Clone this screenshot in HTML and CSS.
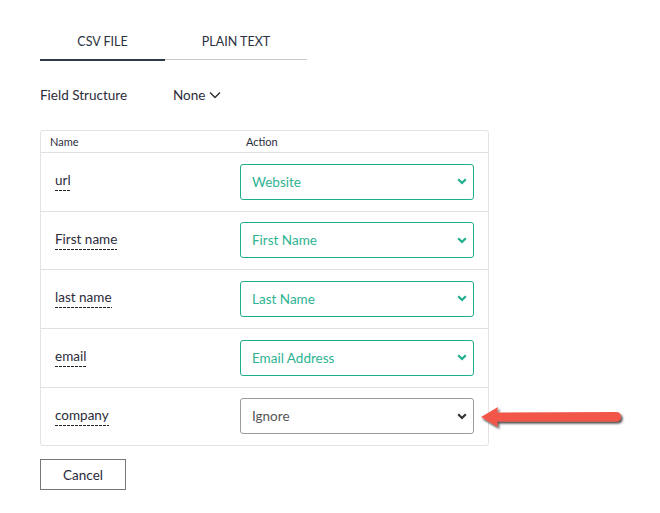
FILE: index.html
```html
<!DOCTYPE html>
<html>
<head>
<meta charset="utf-8">
<link rel="stylesheet" href="styles.css">
</head>
<body>
<div class="page">
  <div class="tabs">
    <div class="tab active">CSV FILE</div>
    <div class="tab">PLAIN TEXT</div>
  </div>
  <div class="structure">
    <span class="label">Field Structure</span>
    <span class="dropdown">None
      <svg width="12" height="8" viewBox="0 0 12 8"><path d="M1 1.5 L6 6.5 L11 1.5" fill="none" stroke="#333" stroke-width="1.5"/></svg>
    </span>
  </div>
  <div class="table">
    <div class="thead">
      <div class="th name-col">Name</div>
      <div class="th action-col">Action</div>
    </div>
    <div class="row">
      <div class="name-col"><span class="fname">url</span></div>
      <div class="action-col"><div class="select green"><span>Website</span><svg class="chev" width="10" height="7" viewBox="0 0 10 7"><path d="M1.2 1.2 L5 5 L8.8 1.2" fill="none" stroke="currentColor" stroke-width="2.2"/></svg></div></div>
    </div>
    <div class="row short">
      <div class="name-col"><span class="fname">First name</span></div>
      <div class="action-col"><div class="select green"><span>First Name</span><svg class="chev" width="10" height="7" viewBox="0 0 10 7"><path d="M1.2 1.2 L5 5 L8.8 1.2" fill="none" stroke="currentColor" stroke-width="2.2"/></svg></div></div>
    </div>
    <div class="row">
      <div class="name-col"><span class="fname">last name</span></div>
      <div class="action-col"><div class="select green"><span>Last Name</span><svg class="chev" width="10" height="7" viewBox="0 0 10 7"><path d="M1.2 1.2 L5 5 L8.8 1.2" fill="none" stroke="currentColor" stroke-width="2.2"/></svg></div></div>
    </div>
    <div class="row">
      <div class="name-col"><span class="fname">email</span></div>
      <div class="action-col"><div class="select green"><span>Email Address</span><svg class="chev" width="10" height="7" viewBox="0 0 10 7"><path d="M1.2 1.2 L5 5 L8.8 1.2" fill="none" stroke="currentColor" stroke-width="2.2"/></svg></div></div>
    </div>
    <div class="row last">
      <div class="name-col"><span class="fname">company</span></div>
      <div class="action-col"><div class="select gray"><span>Ignore</span><svg class="chev" width="10" height="7" viewBox="0 0 10 7"><path d="M1.2 1.2 L5 5 L8.8 1.2" fill="none" stroke="currentColor" stroke-width="2.2"/></svg></div></div>
    </div>
  </div>
  <button class="cancel">Cancel</button>
  <svg class="arrow" width="160" height="34" viewBox="0 0 160 34">
    <defs>
      <filter id="sh" x="-10%" y="-40%" width="120%" height="180%">
        <feDropShadow dx="1.5" dy="2" stdDeviation="1.2" flood-color="#000" flood-opacity="0.75"/>
      </filter>
    </defs>
    <g filter="url(#sh)">
      <path d="M3 14 L20 4 L19 9.5 L138 9 Q143 9 143 13.8 Q143 18.5 138 18.5 L19 18.5 L20 24 Z" fill="#f2574a"/>
    </g>
  </svg>
</div>
</body>
</html>
```

FILE: styles.css
```css
html, body {
  margin: 0;
  padding: 0;
  background: #fff;
}
body {
  font-family: "Lato", "Open Sans", sans-serif;
  color: #2b2b3a;
}
.page {
  position: relative;
  width: 660px;
  height: 513px;
  padding: 29px 0 0 40px;
  box-sizing: border-box;
}
.tabs {
  display: flex;
  width: 267px;
}
.tab {
  font-size: 12.5px;
  text-align: center;
  height: 31px;
  line-height: 26px;
  border-bottom: 1px solid #c8c8c8;
  color: #2b3240;
  box-sizing: border-box;
}
.tab:first-child { width: 125px; }
.tab:last-child { width: 142px; }
.tab.active {
  border-bottom: 2px solid #2f3b4a;
  height: 32px;
}
.structure {
  display: flex;
  align-items: center;
  margin-top: 25px;
  font-size: 13.5px;
  height: 17px;
}
.label {
  width: 133px;
}
.dropdown {
  display: inline-flex;
  align-items: center;
  gap: 4px;
}
.table {
  margin-top: 27px;
  width: 449px;
  border: 1px solid #e3e3e3;
  border-radius: 3px;
  box-sizing: border-box;
}
.thead {
  display: flex;
  height: 22px;
  align-items: center;
  font-size: 11px;
  padding-bottom: 1px;
  box-sizing: border-box;
  border-bottom: 1px solid #e0e0e0;
}
.name-col {
  width: 199px;
  flex: none;
}
.th.name-col { padding-left: 9px; box-sizing: border-box; }
.th.action-col { padding-left: 6px; }
.row {
  display: flex;
  align-items: center;
  height: 59px;
  padding-bottom: 1px;
  border-bottom: 1px solid #e0e0e0;
  box-sizing: border-box;
}
.row.short { height: 58px; }
.row.last { border-bottom: none; height: 57px; }
.row .name-col {
  padding-left: 14px;
  box-sizing: border-box;
  font-size: 13.5px;
}
.fname {
  display: inline-block;
  padding-bottom: 3px;
  background-image: repeating-linear-gradient(to right, #222 0 3px, transparent 3px 4px);
  background-size: 100% 1px;
  background-repeat: no-repeat;
  background-position: left bottom;
  color: #2b2b3a;
}
.select {
  width: 234px;
  height: 36px;
  box-sizing: border-box;
  border-radius: 3px;
  display: flex;
  align-items: center;
  justify-content: space-between;
  padding: 0 6px 0 11px;
  font-size: 13.5px;
}
.select.green {
  border: 1px solid #1fae8c;
  color: #2eb392;
}
.select.green .chev { color: #1fae8c; }
.select.gray {
  border: 1px solid #9a9a9a;
  color: #555;
}
.select.gray .chev { color: #333; }
.cancel {
  display: block;
  margin-top: 13px;
  width: 86px;
  height: 31px;
  border: 1px solid #777;
  background: #fff;
  font-family: inherit;
  font-size: 13.5px;
  color: #2b2b3a;
  padding: 0;
}
.arrow {
  position: absolute;
  left: 478px;
  top: 403px;
}
```
